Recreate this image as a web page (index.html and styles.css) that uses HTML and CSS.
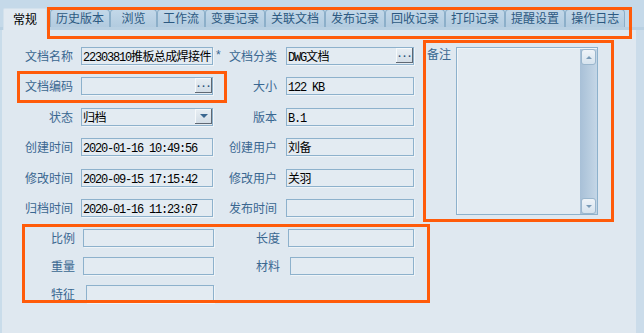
FILE: index.html
```html
<!DOCTYPE html>
<html lang="zh-CN">
<head>
    <meta charset="UTF-8">
    <meta name="viewport" content="width=device-width, initial-scale=1.0">
    <title>文档属性</title>
    <link rel="stylesheet" href="styles.css">
</head>
<body>
    <div id="window">
        <div class="tabs">
            <div class="tab active">常规</div>
            <div class="tab">历史版本</div>
            <div class="tab">浏览</div>
            <div class="tab">工作流</div>
            <div class="tab">变更记录</div>
            <div class="tab">关联文档</div>
            <div class="tab">发布记录</div>
            <div class="tab">回收记录</div>
            <div class="tab">打印记录</div>
            <div class="tab">提醒设置</div>
            <div class="tab">操作日志</div>
        </div>

        <div class="panel">
            <div class="top">
                <div class="form">
                    <div class="lbl">文档名称</div>
                    <div class="field"><span class="txt">22303810</span><span class="hz">推板总成焊接件</span></div>
                    <div class="lbl lbl2"><span class="star">*</span>文档分类</div>
                    <div class="field"><span class="txt">DWG</span><span class="hz">文档</span><span class="btn dots">...</span></div>

                    <div class="lbl">文档编码</div>
                    <div class="field"><span class="btn dots">...</span></div>
                    <div class="lbl lbl2">大小</div>
                    <div class="field"><span class="txt">122 KB</span></div>

                    <div class="lbl">状态</div>
                    <div class="field"><span class="hz">归档</span><span class="btn drop"></span></div>
                    <div class="lbl lbl2">版本</div>
                    <div class="field"><span class="txt">B.1</span></div>

                    <div class="lbl">创建时间</div>
                    <div class="field"><span class="txt">2020-01-16 10:49:56</span></div>
                    <div class="lbl lbl2">创建用户</div>
                    <div class="field"><span class="hz">刘备</span></div>

                    <div class="lbl">修改时间</div>
                    <div class="field"><span class="txt">2020-09-15 17:15:42</span></div>
                    <div class="lbl lbl2">修改用户</div>
                    <div class="field"><span class="hz">关羽</span></div>

                    <div class="lbl">归档时间</div>
                    <div class="field"><span class="txt">2020-01-16 11:23:07</span></div>
                    <div class="lbl lbl2">发布时间</div>
                    <div class="field"></div>
                </div>

                <div class="notes">
                    <div class="notes-lbl">备注</div>
                    <div class="memo">
                        <div class="scroll">
                            <span class="sbtn up"></span>
                            <span class="sbtn down"></span>
                        </div>
                    </div>
                </div>
            </div>

            <div class="extra">
                <div class="lbl">比例</div>
                <div class="field"></div>
                <div class="lbl">长度</div>
                <div class="field"></div>

                <div class="lbl">重量</div>
                <div class="field"></div>
                <div class="lbl">材料</div>
                <div class="field shift2"></div>

                <div class="lbl">特征</div>
                <div class="field shift3"></div>
            </div>
        </div>

        <!-- marcas naranjas de la captura -->
        <div class="mark m-tabs"></div>
        <div class="mark m-code"></div>
        <div class="mark m-notes"></div>
        <div class="mark m-extra"></div>
    </div>
</body>
</html>
```

FILE: styles.css
```css
body {
    margin: 0;
    font-family: "Noto Sans CJK SC", "Noto Sans", sans-serif;
    font-size: 12px;
    background-color: #dfe8f0;
}

#window {
    position: relative;
    width: 644px;
    height: 333px;
    overflow: hidden;
    background-color: #dfe8f0;
}

/* pestañas */
.tabs {
    display: flex;
    align-items: flex-end;
    height: 30px;
    box-sizing: border-box;
    padding-left: 3px;
    background-color: #c5d9e9;
    border-bottom: 3px solid #b9d0e2;
}

.tab {
    box-sizing: border-box;
    height: 18px;
    min-width: 47px;
    padding: 0 5px;
    line-height: 16px;
    text-align: center;
    color: #2c5981;
    background: linear-gradient(#c3d8e9, #b2cbdf);
    border: 1px solid #8cafc9;
    border-bottom: none;
    border-radius: 4px 4px 0 0;
    white-space: nowrap;
}

.tab.active {
    width: 44px;
    min-width: 0;
    height: 22px;
    margin-right: 3px;
    margin-bottom: -3px;
    line-height: 20px;
    color: #000;
    background: #e1e9f1;
    border-color: #d3e1ec;
    border-radius: 2px 2px 0 0;
}

/* panel */
.panel {
    height: 303px;
    box-sizing: border-box;
    border-left: 2px solid #c9dcea;
    border-right: 8px solid #cbdcea;
}

.top {
    display: flex;
    align-items: flex-start;
    padding-top: 17px;
}

.form {
    display: grid;
    grid-template-columns: 79px 132px 73px 128px;
    grid-template-rows: repeat(6, 18px);
    row-gap: 12.4px;
}

.lbl {
    align-self: center;
    text-align: right;
    padding-right: 8px;
    color: #3a6791;
    line-height: 14px;
    white-space: nowrap;
}

.lbl2 {
    padding-right: 9px;
    display: flex;
    justify-content: flex-end;
}

.star {
    margin-right: 7px;
    font-family: "Liberation Mono", monospace;
}

.field {
    position: relative;
    box-sizing: border-box;
    height: 18px;
    padding-left: 1px;
    border: 1px solid #8db1cc;
    background-color: #e3ebf2;
    box-shadow: 1px 1px 0 #eff4f8;
    overflow: hidden;
    white-space: nowrap;
    line-height: 16px;
    color: #000;
}

.txt {
    font-family: "Liberation Mono", monospace;
    font-size: 12px;
    letter-spacing: -1.2px;
}

.hz {
    font-family: "Noto Sans CJK SC", sans-serif;
    font-size: 12px;
    letter-spacing: -0.6px;
}

.btn {
    position: absolute;
    top: 0;
    right: 0;
    width: 17px;
    height: 15px;
    box-sizing: border-box;
    background: linear-gradient(#e9eff4, #d3dde6);
    border-right: 1px solid #5f6873;
    border-bottom: 1px solid #5f6873;
    box-shadow: inset 1px 1px 0 #f6f9fb;
}

.dots {
    font-family: "Liberation Mono", monospace;
    font-weight: bold;
    font-size: 10px;
    line-height: 14px;
    letter-spacing: -1px;
    text-align: center;
    color: #2b4f78;
}

.drop::after {
    content: "";
    position: absolute;
    left: 5px;
    top: 5px;
    border-left: 4px solid transparent;
    border-right: 4px solid transparent;
    border-top: 4px solid #3b6790;
}

/* notas */
.notes {
    display: flex;
    align-items: flex-start;
    margin-left: 13px;
}

.notes-lbl {
    width: 24px;
    margin-right: 5px;
    line-height: 14px;
    color: #3a6791;
}

.memo {
    position: relative;
    width: 142px;
    height: 168px;
    box-sizing: border-box;
    border: 1px solid #8db1cc;
    background-color: #e3ebf2;
    box-shadow: inset 1px 1px 0 #f2f6f9;
}

.scroll {
    position: absolute;
    top: 1px;
    right: 0;
    bottom: 0;
    width: 17px;
    display: flex;
    flex-direction: column;
    justify-content: space-between;
    align-items: center;
    background: linear-gradient(90deg, #a8c0d7, #c4d6e6);
}

.sbtn {
    position: relative;
    width: 15px;
    height: 16px;
    box-sizing: border-box;
    border: 1px solid #9ab6cd;
    border-radius: 3px;
    background: linear-gradient(#eef3f8, #d6e3ee);
}

.sbtn::after {
    content: "";
    position: absolute;
    left: 4px;
    top: 6px;
    border-left: 3px solid transparent;
    border-right: 3px solid transparent;
}

.up::after {
    border-bottom: 3px solid #7b9bb7;
}

.down::after {
    border-top: 3px solid #7b9bb7;
}

/* propiedades extra */
.extra {
    display: grid;
    grid-template-columns: 81px 131px 74px 126px;
    grid-template-rows: repeat(3, 18px);
    row-gap: 10px;
    margin-top: 12px;
}

.shift2 {
    margin-left: 2px;
}

.shift3 {
    margin-left: 3px;
}

/* recuadros naranjas */
.mark {
    position: absolute;
    box-sizing: border-box;
    border: 3px solid #ff5b0a;
}

.m-tabs {
    left: 47px;
    top: 7px;
    width: 585px;
    height: 32px;
}

.m-code {
    left: 17px;
    top: 71px;
    width: 210px;
    height: 32px;
}

.m-notes {
    left: 423px;
    top: 40px;
    width: 191px;
    height: 182px;
}

.m-extra {
    left: 22px;
    top: 224px;
    width: 408px;
    height: 79px;
}
```
